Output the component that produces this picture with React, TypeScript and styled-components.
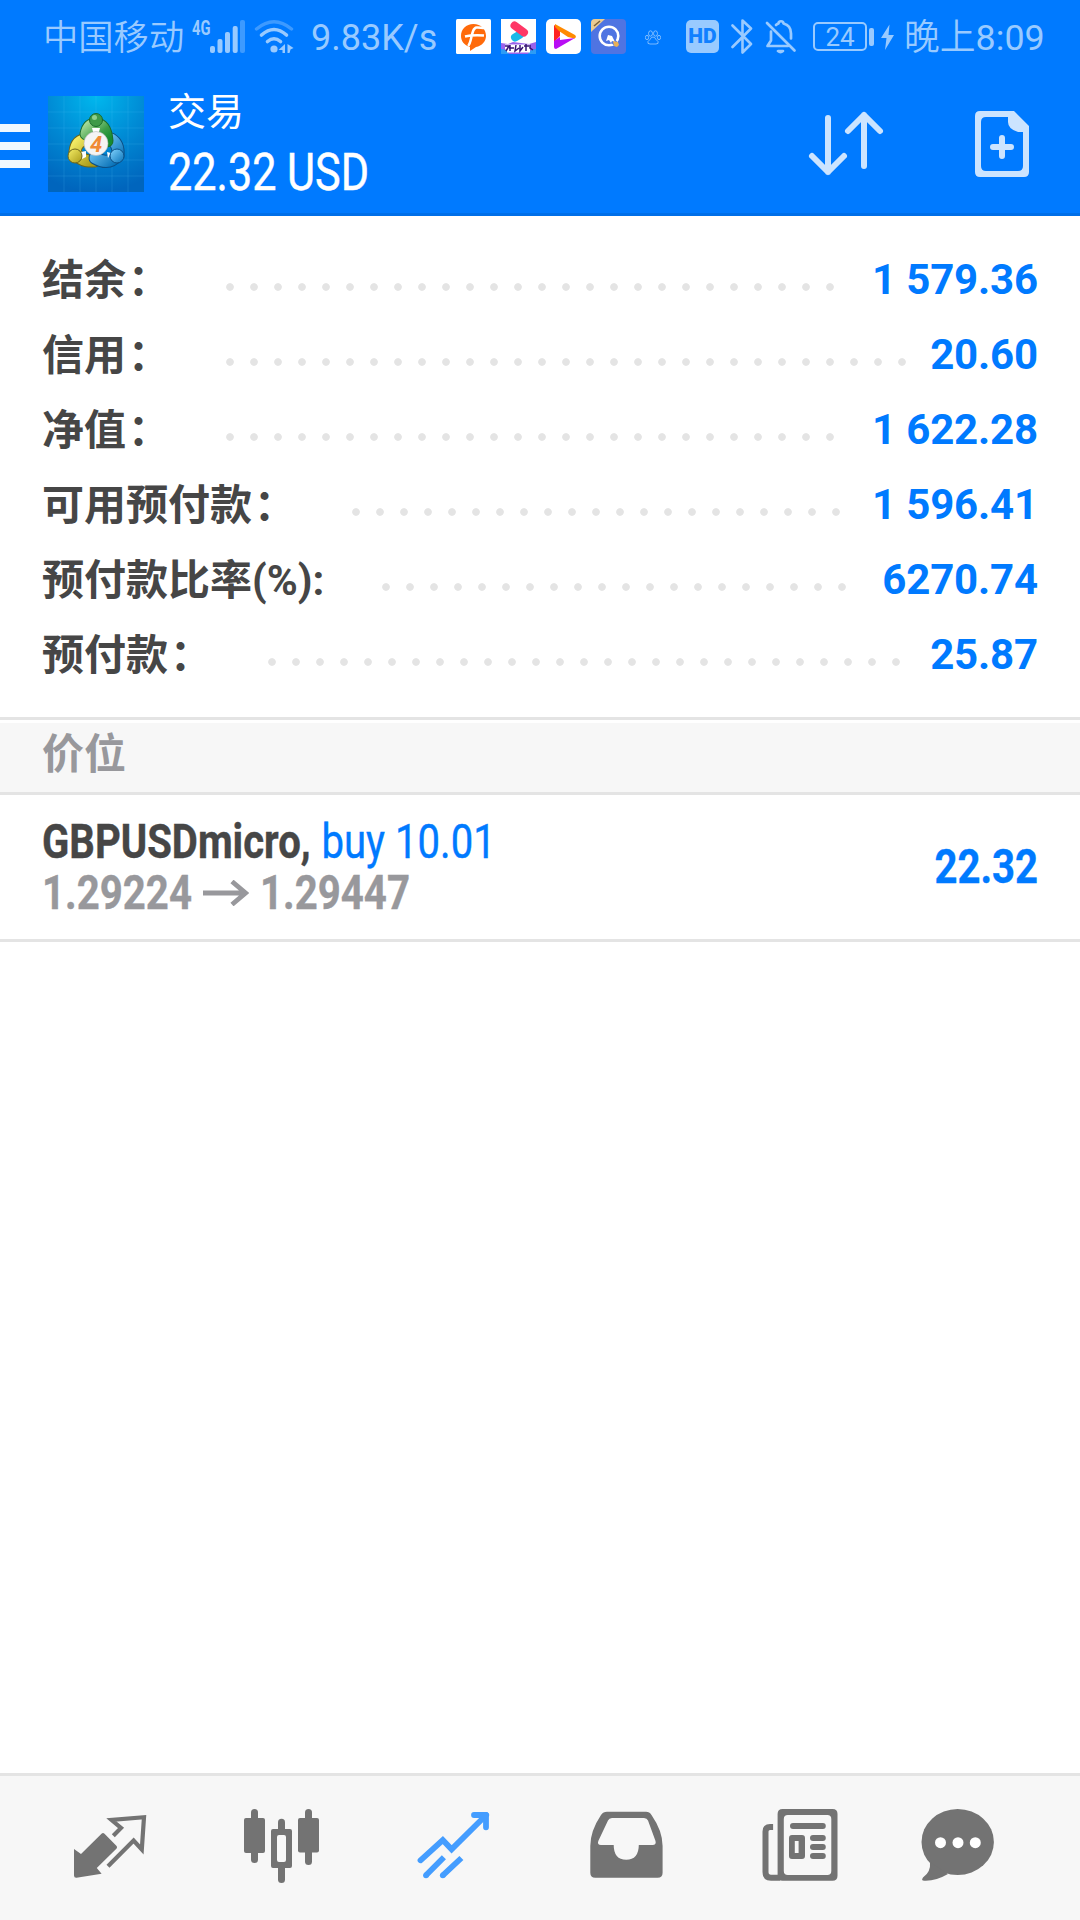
import {ReactNode} from 'react';
import styled, {createGlobalStyle} from 'styled-components';

const color = {
  primary: '#007aff',
  primaryDark: '#006fe8',
  status: '#99caff',
  statusDim: '#3d9aff',
  icon: '#cce4ff',
  bodyFont: '#464646',
  grayFont: '#98989c',
  line: '#e4e4e4',
  bgGray: '#f7f7f7',
  bgWhite: '#ffffff',
  nav: '#737373',
  navActive: '#449dff',
};

interface SummaryItem {
  label: string;
  colon: string;
  value: string;
}

const summary: SummaryItem[] = [
  {label: '结余', colon: '：', value: '1 579.36'},
  {label: '信用', colon: '：', value: '20.60'},
  {label: '净值', colon: '：', value: '1 622.28'},
  {label: '可用预付款', colon: '：', value: '1 596.41'},
  {label: '预付款比率(%)', colon: ':', value: '6270.74'},
  {label: '预付款', colon: '：', value: '25.87'},
];

function StatusBar() {
  return (
    <StatusBarDiv>
      <Carrier>中国移动</Carrier>
      <Network>4G</Network>
      <svg width="35" height="35" viewBox="0 0 35 35" fill={color.status}>
        <rect x="0" y="27" width="5" height="7" rx="2" />
        <rect x="7.5" y="20" width="5" height="14" rx="2" />
        <rect x="15" y="13" width="5" height="21" rx="2" />
        <rect x="22.7" y="7" width="5" height="27" rx="2" />
        <rect x="30" y="1" width="5" height="33" rx="2" fill={color.statusDim} />
      </svg>
      <StatusIcon $left={9} width="41" height="35" viewBox="0 0 41 35" fill="none" strokeLinecap="round">
        <path d="M2.5 10Q20 -4.5 37.5 10" stroke={color.statusDim} strokeWidth="3.4" />
        <path d="M7.5 16Q20 5 32.5 16" stroke={color.status} strokeWidth="3.6" />
        <path d="M13.5 22.5Q20 17 26.5 22.5" stroke={color.status} strokeWidth="3.6" />
        <circle cx="20" cy="30" r="3.6" fill={color.status} />
        <path d="M31 25v9h-2.5v-3h-4zM33.5 25l6 4-3 1.5-1 3.5h-2z" fill={color.status} />
      </StatusIcon>
      <Speed>9.83K/s</Speed>
      <AppIcons>
        <svg width="35" height="35" viewBox="0 0 35 35">
          <rect width="35" height="35" rx="1.5" fill="#fff" />
          <path d="M17.5 5C10 5 5 10 5 17c0 5 3 9 9 11l0 4 6-4c6-1 10-6 10-11C30 10 25 5 17.5 5z" fill="#ff6a0a" />
          <path d="M12 27c4-3 3-18 8.500-18.500 3-.3 5 .5 8 .5M9 17.500c6-1.500 12-1.500 19-1" stroke="#fff" strokeWidth="2.5" fill="none" />
        </svg>
        <svg width="35" height="35" viewBox="0 0 35 35">
          <rect width="35" height="35" fill="#fff" />
          <path d="M14 18.5l5-3" stroke="#19b9e8" strokeWidth="8" strokeLinecap="round" />
          <path d="M13.5 6.5l9.5 7" stroke="#ff3765" strokeWidth="8" strokeLinecap="round" />
          <path d="M0 24l7 1 5-2 16 2 7-2v12H0z" fill="#9a63ec" />
          <path d="M0 30q6 0 8 5H0zM27 35q2-5 8-5v5z" fill="#2d9cf5" />
          <path d="M4 28h25M6 31h23" stroke="#fff" strokeWidth="5" />
          <path
            d="M4 27h4l-3 5M9 26v6M8 29h5M15 26l-1 6 4-3M19 26v6l3-4M23 27h5M25 25v7M29 26v3l3 2"
            stroke="#371474"
            strokeWidth="1.5"
            fill="none"
          />
        </svg>
        <svg width="35" height="35" viewBox="0 0 35 35">
          <rect width="35" height="35" rx="5" fill="#fff" />
          <path d="M8 6v17l6-6V12l10 5z" fill="#f22" />
          <path d="M9 5l20 11q2 2-.5 3.5L22 18 13 12 9 8z" fill="#ff8a00" />
          <path d="M8 22l6-4v3l15-2L10 30q-2 0-2-2z" fill="#b80df4" />
        </svg>
        <svg width="35" height="35" viewBox="0 0 35 35">
          <rect width="35" height="35" rx="4" fill="#4f74e2" />
          <path d="M4 0h10L0 13V4q0-4 4-4z" fill="#e9cb92" />
          <path d="M3 7l6-5" stroke="#79603a" strokeWidth="1.5" />
          <circle cx="18" cy="17" r="9.3" stroke="#fff" strokeWidth="2.6" fill="none" />
          <path d="M22 22l4 4" stroke="#4f74e2" strokeWidth="5" />
          <path d="M17 16l4 1 3 6-3-1-1 2-2-3-3 1z" fill="#fff" />
          <path d="M22 22l5 1 1 3-2 2-3-1z" fill="#e9b058" />
        </svg>
      </AppIcons>
      <StatusIcon $left={19} width="16" height="35" viewBox="0 0 16 35" fill="none" stroke={color.status} strokeWidth=".8">
        <ellipse cx="5.5" cy="14.5" rx="2" ry="2.7" />
        <ellipse cx="10.5" cy="14.5" rx="2" ry="2.7" />
        <ellipse cx="2" cy="18.5" rx="1.6" ry="2.2" />
        <ellipse cx="14" cy="18.5" rx="1.6" ry="2.2" />
        <path d="M8 18q-2 0-3 2.5l-2 2q-1 2.5 2 2.5h6q3 0 2-2.5l-2-2Q10 18 8 18z" />
      </StatusIcon>
      <Hd>HD</Hd>
      <StatusIcon $left={12} width="22" height="35" viewBox="0 0 22 35" fill="none" stroke={color.status} strokeWidth="2.6" strokeLinejoin="round" strokeLinecap="round">
        <path d="M1.5 6.5L20 25l-8.5 8.5v-32L20 9.5 1.5 28" />
      </StatusIcon>
      <StatusIcon $left={12} width="32" height="35" viewBox="0 0 32 35" fill="none" stroke={color.status} strokeWidth="2.7" strokeLinejoin="round" strokeLinecap="round">
        <path d="M2 4l27.5 27.5" />
        <path d="M11 6q1-1 2.5-1.5c0-3 5-3 5 0 6 1.5 7.5 6 7.5 10v5M6 12.5v9L2.500 27H23" />
        <path d="M13 32h5q-2.5 2-5 0z" />
      </StatusIcon>
      <Battery>24</Battery>
      <BatteryTip />
      <StatusIcon $left={7} width="13" height="35" viewBox="0 0 13 35" fill={color.status}>
        <path d="M8.5 5.5L0 19h5.5L4 31l9-15H7.5z" />
      </StatusIcon>
      <Clock>
        晚上<span>8:09</span>
      </Clock>
    </StatusBarDiv>
  );
}

function AppLogo() {
  return (
    <LogoSvg viewBox="0 0 96 96">
      <defs>
        <radialGradient id="logoBg" cx=".5" cy="0" r="1">
          <stop offset="0" stopColor="#00b8ee" />
          <stop offset=".5" stopColor="#008bd5" />
          <stop offset="1" stopColor="#0065bd" />
        </radialGradient>
        <linearGradient id="logoGreen" x2="1" y2="1">
          <stop offset="0" stopColor="#a3d894" />
          <stop offset=".6" stopColor="#3c9e48" />
          <stop offset="1" stopColor="#168b30" />
        </linearGradient>
        <linearGradient id="logoYellow" x2="1" y2="1">
          <stop offset="0" stopColor="#f5ee67" />
          <stop offset="1" stopColor="#a99a18" />
        </linearGradient>
        <linearGradient id="logoBlue" x2="1" y2="1">
          <stop offset="0" stopColor="#83d5ff" />
          <stop offset="1" stopColor="#0871b7" />
        </linearGradient>
      </defs>
      <rect width="96" height="96" fill="url(#logoBg)" />
      <path
        d="M16 0v96M32 0v96M48 0v96M64 0v96M80 0v96M0 16h96M0 32h96M0 48h96M0 64h96M0 80h96"
        stroke="#5fd0ff"
        strokeOpacity=".16"
      />
      <g fill="none" strokeLinecap="round">
        <path d="M40 43Q28 44 27 56q5 10 20 9" stroke="#6d661b" strokeWidth="13" />
        <path d="M40 43Q28 44 27 56q5 10 20 9" stroke="url(#logoYellow)" strokeWidth="11" />
        <path d="M63 43q8 5 7 16-9 11-23 3" stroke="#0b4f86" strokeWidth="13" />
        <path d="M63 43q8 5 7 16-9 11-23 3" stroke="url(#logoBlue)" strokeWidth="11" />
        <path d="M38 38q2-10 10-10 10 1 11 17" stroke="#1a6b2b" strokeWidth="13" />
        <path d="M38 38q2-10 10-10 10 1 11 17" stroke="url(#logoGreen)" strokeWidth="11" />
      </g>
      <path d="M44 32h8l-1 4h-6zM33 56l5-1v6l-4 2zM59 56l4 1-3 5z" fill="#fff" />
      <circle cx="48" cy="24" r="6.5" fill="#3f9a48" stroke="#1a6b2b" />
      <circle cx="46.5" cy="21.5" r="2.5" fill="#8fcf8c" />
      <circle cx="27" cy="60" r="7" fill="url(#logoYellow)" stroke="#6d661b" />
      <circle cx="69" cy="60" r="7" fill="url(#logoBlue)" stroke="#0b4f86" />
      <circle cx="48" cy="47.5" r="12" fill="#f4f4f4" stroke="#b9b9b9" strokeWidth=".6" />
      <text x="48" y="55.5" textAnchor="middle" fontFamily="Roboto" fontStyle="italic" fontWeight="700" fontSize="22" fill="#f08a35">
        4
      </text>
    </LogoSvg>
  );
}

function Header() {
  return (
    <HeaderDiv>
      <MenuButton>
        <span />
        <span />
        <span />
      </MenuButton>
      <AppLogo />
      <TitleDiv>
        <PageName>交易</PageName>
        <Profit>22.32 USD</Profit>
      </TitleDiv>
      <SortIcon viewBox="0 0 80 80">
        <path d="M22 14v54M6 52l16 16 16-16M58 62V11M42 27l16-16 16 16" />
      </SortIcon>
      <NewOrderIcon viewBox="0 0 54 66">
        <path fillRule="evenodd" d="M5 0H39L54 15V61q0 5-5 5H5q-5 0-5-5V5Q0 0 5 0zM11 6Q6 6 6 11V55q0 5 5 5H43q5 0 5-5V21H43Q33 18 33 11V6z" />
        <path d="M27 27v18M18 36h18" />
      </NewOrderIcon>
    </HeaderDiv>
  );
}

function SummaryRow({label, colon, value}: SummaryItem) {
  return (
    <RowDiv>
      <RowLabel>
        {label}
        <Colon $wide={colon === '：'}>{colon}</Colon>
      </RowLabel>
      <Dots />
      <RowValue>{value}</RowValue>
    </RowDiv>
  );
}

interface NavItemProps {
  active?: boolean;
  children: ReactNode;
}

function NavItem({active = false, children}: NavItemProps) {
  return (
    <NavButton $active={active}>
      <svg width="100" height="100" viewBox="0 0 100 100">
        {children}
      </svg>
    </NavButton>
  );
}

function BottomNav() {
  return (
    <NavBar>
      <NavItem>
        <path d="M14 51L21 56 41.5 35.7Q43 34.5 44.5 35.7L56.6 48Q57.6 49.3 56.6 50.5L36.8 70 41.6 75.7 16.5 79.8Q14 80 14 77.5z" fill="currentColor" />
        <path d="M53.3 37.7L61 30 51.5 22 84 19.2 81.8 51.5 73.6 42.5 48 68.3" fill="none" stroke="currentColor" strokeWidth="4.2" />
      </NavItem>
      <NavItem>
        <g fill="currentColor">
          <rect x="12" y="20" width="21" height="35" rx="2" />
          <rect x="19" y="11" width="7" height="54" rx="3.5" />
          <rect x="66" y="20" width="21" height="34.5" rx="2" />
          <rect x="73" y="11" width="7" height="56" rx="3.5" />
          <rect x="46" y="20.7" width="7" height="16" rx="3.5" />
          <rect x="46" y="66" width="7" height="19" rx="3.5" />
          <path fillRule="evenodd" d="M41 31h17q2 0 2 2v35q0 2-2 2H41q-2 0-2-2V33q0-2 2-2zM47 37q-2 0-2 2v23q0 2 2 2h5q2 0 2-2V39q0-2-2-2z" />
        </g>
      </NavItem>
      <NavItem active>
        <g fill="none" stroke="currentColor" strokeWidth="5.8">
          <path d="M16.5 62.3L38.8 42l8.8 9.3L82.2 17" strokeLinecap="round" />
          <path d="M70 17h12v12.3" strokeLinecap="round" strokeLinejoin="round" />
          <path d="M39.9 59.3L22 77.3M57.4 60L38.8 77.3" />
        </g>
        <circle cx="22" cy="77.3" r="2.9" fill="currentColor" />
        <circle cx="38.8" cy="77.3" r="2.9" fill="currentColor" />
      </NavItem>
      <NavItem>
        <path
          fill="currentColor"
          fillRule="evenodd"
          d="M31 13.7H70Q73.5 13.7 75.5 17 86.6 33 86.6 48V74.7q0 5-5 5H19.3q-5 0-5-5V48Q14.3 33 25 17q2.3-3.3 6-3.3zM36 20q-3 0-4 2.5L22.3 43Q21 47 25 47H37.7q0 14.7 12.5 14.7T62.8 47H76.5q4 0 3-4L72 22.5Q71 20 68 20z"
        />
      </NavItem>
      <NavItem>
        <path fill="currentColor" fillRule="evenodd" d="M34.6 11H84.5q5 0 5 5V77.7q0 5-5 5H34.6q-5 0-5-5V16q0-5 5-5zM39.8 17q-4 0-4 4V73q0 4 4 4H79.3q4 0 4-4V21q0-4-4-4z" />
        <path d="M25.1 29H22q-4.5 0-4.5 4.5V74q0 5.7 5.5 5.7H32" fill="none" stroke="currentColor" strokeWidth="6" />
        <g fill="currentColor">
          <rect x="42" y="25" width="35.8" height="6" rx="3" />
          <path fillRule="evenodd" d="M44 37h10q3 0 3 3v18q0 3-3 3H44q-3 0-3-3V40q0-3 3-3zM46.8 43v12h3.8V43z" />
          <rect x="62" y="37" width="15.8" height="6" rx="3" />
          <rect x="62" y="46" width="15.8" height="6" rx="3" />
          <rect x="62" y="55" width="15.8" height="6" rx="3" />
        </g>
      </NavItem>
      <NavItem>
        <g fill="currentColor">
          <ellipse cx="37.7" cy="44" rx="36.2" ry="33" />
          <path d="M10 64q1 10-7 15.5-2.5 3.5 2 3.2Q16 83 28 76z" />
        </g>
        <g fill={color.bgWhite}>
          <circle cx="20.5" cy="44.7" r="5.5" />
          <circle cx="38" cy="44.7" r="5.5" />
          <circle cx="55.3" cy="44.7" r="5.5" />
        </g>
      </NavItem>
    </NavBar>
  );
}

function App() {
  return (
    <Page>
      <GlobalStyle />
      <StatusBar />
      <Header />
      <SummarySection>
        {summary.map(item => (
          <SummaryRow key={item.label} {...item} />
        ))}
      </SummarySection>
      <SectionTitle>价位</SectionTitle>
      <PositionDiv>
        <PositionInfo>
          <SymbolLine>
            <b>GBPUSDmicro,</b>
            <BuyText>buy 10.01</BuyText>
          </SymbolLine>
          <PriceLine>
            <PriceText>1.29224</PriceText>
            <svg width="46" height="26" viewBox="0 0 46 26" fill="none" stroke="currentColor" strokeWidth="4.8">
              <path d="M0 13h43M29 1.5l13.5 11.5-13.5 11.5" />
            </svg>
            <PriceText>1.29447</PriceText>
          </PriceLine>
        </PositionInfo>
        <PositionProfit>22.32</PositionProfit>
      </PositionDiv>
      <Spacer />
      <BottomNav />
    </Page>
  );
}

const GlobalStyle = createGlobalStyle`
  * {
    box-sizing: border-box;
  }
  body {
    margin: 0;
    background-color: ${color.bgWhite};
    font-family: Roboto, 'Noto Sans CJK SC', sans-serif;
  }
  svg {
    display: block;
    flex-shrink: 0;
  }
`;

const Page = styled.div`
  width: 1080px;
  height: 1920px;
  display: flex;
  flex-direction: column;
  overflow: hidden;
`;

const StatusBarDiv = styled.div`
  height: 72px;
  padding: 1px 0 0 43px;
  display: flex;
  align-items: center;
  flex-shrink: 0;
  background-color: ${color.primary};
  color: ${color.status};
  font-size: 36px;
  line-height: 70px;
  white-space: nowrap;
`;

const Carrier = styled.div`
  width: 149px;
  padding-top: 3px;
  font-size: 35.3px;
  font-weight: 350;
`;

const Network = styled.div`
  width: 18px;
  height: 36px;
  line-height: 18px;
  font-size: 21px;
  font-weight: 700;
  transform: scaleX(0.7);
  transform-origin: left;
`;

const StatusIcon = styled.svg<{$left: number}>`
  margin-left: ${({$left}) => $left}px;
`;

const Speed = styled.div`
  width: 161px;
  padding: 3px 0 0 16px;
`;

const AppIcons = styled.div`
  display: flex;
  gap: 10px;
`;

const Hd = styled.div`
  width: 33px;
  height: 33px;
  margin-left: 25px;
  border-radius: 5px;
  background-color: ${color.status};
  color: #1180ff;
  font-size: 21px;
  font-weight: 900;
  line-height: 33px;
  text-align: center;
`;

const Battery = styled.div`
  width: 54px;
  height: 29px;
  margin-left: 16px;
  border: 2px solid ${color.status};
  border-radius: 5px;
  font-size: 26px;
  line-height: 27px;
  text-align: center;
`;

const BatteryTip = styled.div`
  width: 5px;
  height: 18px;
  margin-left: 2px;
  border-radius: 2px;
  background-color: ${color.status};
`;

const Clock = styled.div`
  padding: 3px 0 0 10px;
  font-size: 35.8px;
  font-weight: 350;
  span {
    font-weight: 400;
  }
`;

const HeaderDiv = styled.div`
  height: 144px;
  padding-top: 3px;
  display: flex;
  align-items: center;
  flex-shrink: 0;
  background-color: ${color.primary};
  border-bottom: 3px solid ${color.primaryDark};
`;

const MenuButton = styled.div`
  width: 48px;
  padding-top: 4px;
  display: flex;
  flex-direction: column;
  gap: 10px;
  span {
    width: 30px;
    height: 8px;
    background-color: #f0f8ff;
  }
`;

const LogoSvg = styled.svg`
  width: 96px;
  height: 96px;
`;

const TitleDiv = styled.div`
  width: 640px;
  padding: 2px 0 0 24px;
  color: ${color.bgWhite};
`;

const PageName = styled.div`
  font-size: 38px;
  line-height: 56px;
`;

const Profit = styled.div`
  font-size: 52px;
  line-height: 66px;
  white-space: nowrap;
  -webkit-text-stroke: 0.5px currentColor;
  transform: scaleX(0.83);
  transform-origin: left;
`;

const SortIcon = styled.svg`
  width: 80px;
  height: 80px;
  margin-left: 22px;
  fill: none;
  stroke: ${color.icon};
  stroke-width: 6px;
  stroke-linecap: round;
  stroke-linejoin: round;
`;

const NewOrderIcon = styled.svg`
  width: 54px;
  height: 66px;
  margin-left: 89px;
  fill: ${color.icon};
  path + path {
    stroke: ${color.icon};
    stroke-width: 6px;
    stroke-linecap: round;
  }
`;

const SummarySection = styled.div`
  height: 504px;
  padding: 26px 42px 0 42px;
  flex-shrink: 0;
  border-bottom: 3px solid ${color.line};
`;

const RowDiv = styled.div`
  height: 75px;
  display: flex;
  align-items: center;
  font-size: 42px;
  font-weight: 700;
  line-height: 75px;
  white-space: nowrap;
`;

const RowLabel = styled.div`
  padding-top: 2px;
  color: ${color.bodyFont};
`;

const Colon = styled.span<{$wide: boolean}>`
  display: inline-block;
  width: ${({$wide}) => ($wide ? '42px' : '12px')};
  transform: translateX(${({$wide}) => ($wide ? 2 : 0)}px);
`;

const Dots = styled.div`
  flex: 1;
  height: 24px;
  margin: 15px 23px 0 50px;
  background: radial-gradient(circle, ${color.line} 3.4px, transparent 4.2px) 0 0 / 24px 24px repeat-x;
`;

const RowValue = styled.div`
  color: ${color.primary};
  letter-spacing: -0.15px;
`;

const SectionTitle = styled.div`
  height: 72px;
  margin-top: 3px;
  padding: 2px 0 0 42px;
  flex-shrink: 0;
  background-color: ${color.bgGray};
  border-bottom: 3px solid ${color.line};
  color: ${color.grayFont};
  font-size: 42px;
  font-weight: 700;
  line-height: 60px;
`;

const PositionDiv = styled.div`
  height: 147px;
  padding: 0 42px;
  display: flex;
  align-items: center;
  justify-content: space-between;
  flex-shrink: 0;
  border-bottom: 3px solid ${color.line};
  font-size: 48px;
  white-space: nowrap;
`;

const PositionInfo = styled.div`
  line-height: 51px;
`;

const SymbolLine = styled.div`
  display: flex;
  gap: 13px;
  color: ${color.bodyFont};
  -webkit-text-stroke: 0.4px currentColor;
  transform: scaleX(0.835);
  transform-origin: left;
`;

const BuyText = styled.span`
  color: ${color.primary};
`;

const PriceLine = styled.div`
  display: flex;
  align-items: center;
  gap: 11px;
  color: ${color.grayFont};
`;

const PriceText = styled.span`
  width: 150px;
  font-weight: 700;
  -webkit-text-stroke: 0.4px currentColor;
  transform: scaleX(0.837);
  transform-origin: left;
`;

const PositionProfit = styled.div`
  padding-bottom: 2px;
  color: ${color.primary};
  font-weight: 700;
  -webkit-text-stroke: 0.4px currentColor;
  transform: scaleX(0.835);
  transform-origin: right;
`;

const Spacer = styled.div`
  flex: 1;
`;

const NavBar = styled.div`
  height: 147px;
  padding: 0 24px;
  display: grid;
  grid-template-columns: repeat(6, 172px);
  flex-shrink: 0;
  background-color: ${color.bgGray};
  border-top: 3px solid ${color.line};
`;

const NavButton = styled.div<{$active: boolean}>`
  display: flex;
  align-items: center;
  justify-content: center;
  color: ${({$active}) => ($active ? color.navActive : color.nav)};
`;

export default App;
